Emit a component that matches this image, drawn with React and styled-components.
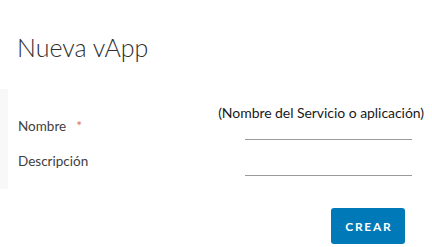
import React from 'react';
import styled, { createGlobalStyle } from "styled-components";

const GlobalStyle = createGlobalStyle`
  html, body {
    margin: 0;
    padding: 0;
    background: #ffffff;
  }
  * {
    box-sizing: border-box;
  }
`;

const Modal = styled.div`
  width: 432px;
  height: 247px;
  display: flex;
  flex-direction: column;
  font-family: Lato, "Noto Sans", sans-serif;
  background: #ffffff;
  overflow: hidden;
`;

const Title = styled.h3`
  margin: 35px 0 0 17px;
  font-weight: 300;
  font-size: 25px;
  line-height: 24px;
  color: #2f2f2f;
`;

const Body = styled.div`
  display: flex;
  margin-top: 30px;
  height: 100px;
`;

const Strip = styled.div`
  width: 8px;
  background: #f8f8f8;
`;

const Labels = styled.div`
  display: flex;
  flex-direction: column;
  gap: 19px;
  padding: 29px 0 0 10px;
`;

const Label = styled.label`
  font-size: 13.5px;
  line-height: 16px;
  color: #404040;
`;

const Required = styled.span`
  color: #d46a6a;
  margin-left: 10px;
`;

const Fields = styled.div`
  margin-left: auto;
  display: flex;
  flex-direction: column;
  align-items: flex-end;
  padding: 16px 8px 0 0;
`;

const Hint = styled.div`
  font-size: 14px;
  line-height: 16px;
  color: #1a1a1a;
  letter-spacing: -0.05px;
`;

const Input = styled.input`
  width: 167px;
  height: ${(p) => p.$height}px;
  margin: ${(p) => p.$top}px 12px 0 0;
  padding: 0;
  border: none;
  border-bottom: 1px solid #9a9a9a;
  outline: none;
  background: transparent;
  font-family: inherit;
  font-size: 13px;
`;

const Footer = styled.div`
  display: flex;
  justify-content: flex-end;
  padding: 19px 27px 0 0;
`;

const Button = styled.button`
  width: 74px;
  height: 36px;
  border: none;
  border-radius: 3px;
  background: #0079b8;
  color: #ffffff;
  font-family: Lato, "Noto Sans", sans-serif;
  font-weight: 700;
  font-size: 12px;
  letter-spacing: 1.7px;
  padding: 0 0 0 1.7px;
  cursor: pointer;
`;

const App = () => {
  return (
    <Modal>
      <GlobalStyle />
      <Title>Nueva vApp</Title>

      <Body>
        <Strip />
        <Labels>
          <Label>
            Nombre<Required>*</Required>
          </Label>
          <Label>Descripción</Label>
        </Labels>
        <Fields>
          <Hint>(Nombre del Servicio o aplicación)</Hint>
          <Input $height={19} $top={0} />
          <Input $height={24} $top={12} />
        </Fields>
      </Body>

      <Footer>
        <Button>CREAR</Button>
      </Footer>
    </Modal>
  );
};

export default App;
